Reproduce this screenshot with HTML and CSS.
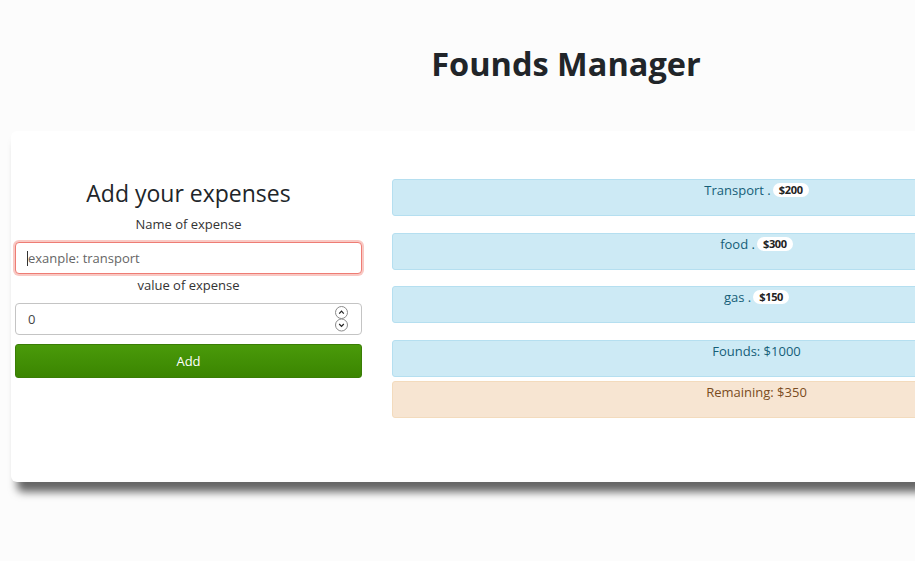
FILE: index.html
```html
<!DOCTYPE html>
<html lang="en">
<head>
    <meta charset="UTF-8">
    <meta name="viewport" content="width=device-width, initial-scale=1.0">
    <title>Founds Manager</title>
    <link rel="stylesheet" href="styles.css">
</head>
<body>
    <div class="container">
        <h1>Founds Manager</h1>

        <div class="card">
            <div class="form-section">
                <h2>Add your expenses</h2>
                <label for="nome">Name of expense</label>
                <div class="input-wrap">
                    <input type="text" id="nome" class="input invalid" placeholder="exanple: transport">
                    <span class="caret"></span>
                </div>
                <label for="valor">value of expense</label>
                <div class="input-wrap">
                    <input type="text" id="valor" class="input" value="0">
                    <span class="spinner">
                        <svg width="13" height="26" viewBox="0 0 13 26">
                            <rect x="0.5" y="0.5" width="12" height="12" rx="6" fill="#fff" stroke="#8a8a8a"/>
                            <path d="M4.2 7.6 L6.5 5.2 L8.8 7.6" fill="none" stroke="#222" stroke-width="1.2"/>
                            <rect x="0.5" y="13" width="12" height="12" rx="6" fill="#fff" stroke="#8a8a8a"/>
                            <path d="M4.2 18 L6.5 20.4 L8.8 18" fill="none" stroke="#222" stroke-width="1.2"/>
                        </svg>
                    </span>
                </div>
                <button type="button" class="btn-add">Add</button>
            </div>

            <div class="list-section">
                <div class="alert info">Transport .<span class="badge">$200</span></div>
                <div class="alert info">food .<span class="badge">$300</span></div>
                <div class="alert info">gas .<span class="badge">$150</span></div>
                <div class="alert info total">Founds: $1000</div>
                <div class="alert warning">Remaining: $350</div>
            </div>
        </div>
    </div>
</body>
</html>
```

FILE: styles.css
```css
html {
    overflow: hidden;
}

body {
    font-family: "Open Sans", Arial, sans-serif;
    margin: 0;
    background-color: #fcfcfc;
    color: #212529;
}

.container {
    width: 1110px;
    margin-left: 11px;
    padding-bottom: 40px;
}

h1 {
    text-align: center;
    font-size: 32.5px;
    font-weight: bold;
    margin: 0;
    padding-top: 42px;
    height: 131px;
    box-sizing: border-box;
    line-height: 44px;
}

.card {
    background-color: white;
    border-radius: 6px;
    box-shadow: 6px 10px 8px rgba(0, 0, 0, 0.6);
    height: 351px;
    display: flex;
    gap: 30px;
    padding-left: 4px;
    box-sizing: border-box;
}

.form-section {
    width: 347px;
    padding-top: 46px;
    display: flex;
    flex-direction: column;
}

h2 {
    text-align: center;
    font-size: 23px;
    font-weight: normal;
    margin: 0 0 6px 0;
    line-height: 32px;
}

label {
    display: block;
    text-align: center;
    font-size: 13px;
    line-height: 18px;
    color: #333;
    margin-bottom: 9px;
}

.input-wrap {
    position: relative;
    margin-bottom: 2px;
}

.input {
    width: 100%;
    height: 32px;
    box-sizing: border-box;
    border: 1px solid #c4c4c4;
    border-radius: 4px;
    padding: 0 12px;
    font-family: "Open Sans", Arial, sans-serif;
    font-size: 13px;
    color: #444;
    background: white;
    outline: none;
}

.input.invalid {
    border-color: #ee7c74;
    box-shadow: 0 0 0 2px #f9c9c4;
}

.input::placeholder {
    color: #666;
}

.caret {
    position: absolute;
    left: 12px;
    top: 9px;
    width: 1px;
    height: 15px;
    background: #333;
}

.spinner {
    position: absolute;
    right: 14px;
    top: 3px;
    line-height: 0;
}

.btn-add {
    margin-top: 7px;
    height: 34px;
    border: 1px solid #3a7d05;
    border-radius: 3px;
    background: linear-gradient(#4a9a0a, #3b8501);
    color: white;
    font-family: "Open Sans", Arial, sans-serif;
    font-size: 13px;
    cursor: pointer;
}

.list-section {
    flex: 1;
    padding-top: 48px;
}

.alert {
    height: 37px;
    box-sizing: border-box;
    border-radius: 3px;
    text-align: center;
    font-size: 13px;
    line-height: 18px;
    padding-top: 1px;
    margin-bottom: 16.5px;
}

.info {
    background-color: #cdeaf5;
    border: 1px solid #b5dff0;
    color: #155e78;
}

.total {
    margin-bottom: 4px;
}

.warning {
    background-color: #f7e5d2;
    border: 1px solid #f3dbbd;
    color: #7a4c22;
}

.badge {
    display: inline-block;
    background: white;
    color: #222;
    font-size: 11px;
    font-weight: bold;
    line-height: 14px;
    padding: 0 6px;
    margin-left: 2px;
    border-radius: 8px;
    vertical-align: 1px;
    letter-spacing: -0.3px;
}
```
